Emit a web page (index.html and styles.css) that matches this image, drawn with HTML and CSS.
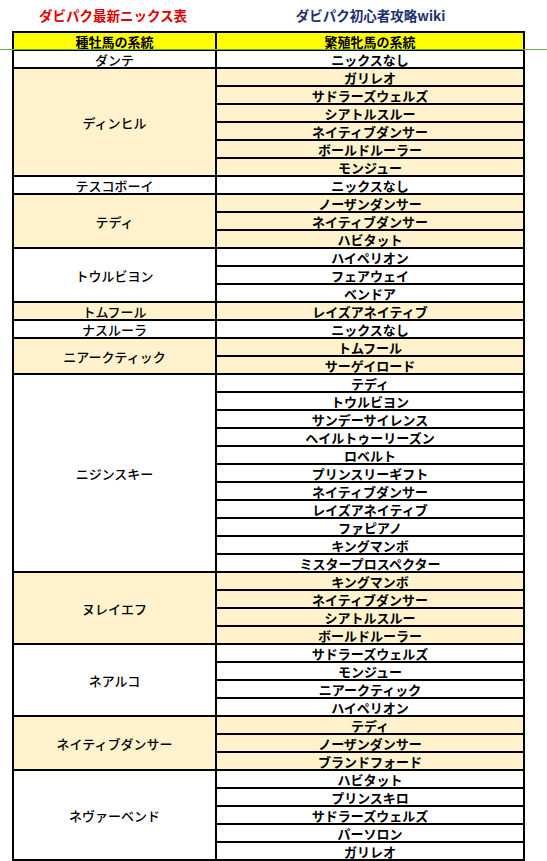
FILE: index.html
```html
<!DOCTYPE html>
<html lang="ja">
<head>
<meta charset="utf-8">
<link rel="stylesheet" href="styles.css">
</head>
<body>
<div class="page">
  <div class="titles">
    <div class="title red">ダビパク最新ニックス表</div>
    <div class="title navy">ダビパク初心者攻略wiki</div>
  </div>
  <table class="nicks">
    <thead>
      <tr><th class="l">種牡馬の系統</th><th class="r">繁殖牝馬の系統</th></tr>
    </thead>
    <tbody>
      <tr class="w"><td class="l one">ダンテ</td><td class="r">ニックスなし</td></tr>

      <tr class="b"><td class="l" rowspan="6">ディンヒル</td><td class="r">ガリレオ</td></tr>
      <tr class="b"><td class="r">サドラーズウェルズ</td></tr>
      <tr class="b"><td class="r">シアトルスルー</td></tr>
      <tr class="b"><td class="r">ネイティブダンサー</td></tr>
      <tr class="b"><td class="r">ボールドルーラー</td></tr>
      <tr class="b"><td class="r">モンジュー</td></tr>

      <tr class="w"><td class="l one">テスコボーイ</td><td class="r">ニックスなし</td></tr>

      <tr class="b"><td class="l" rowspan="3">テディ</td><td class="r">ノーザンダンサー</td></tr>
      <tr class="b"><td class="r">ネイティブダンサー</td></tr>
      <tr class="b"><td class="r">ハビタット</td></tr>

      <tr class="w"><td class="l" rowspan="3">トウルビヨン</td><td class="r">ハイペリオン</td></tr>
      <tr class="w"><td class="r">フェアウェイ</td></tr>
      <tr class="w"><td class="r">ベンドア</td></tr>

      <tr class="b"><td class="l one">トムフール</td><td class="r">レイズアネイティブ</td></tr>

      <tr class="w"><td class="l one">ナスルーラ</td><td class="r">ニックスなし</td></tr>

      <tr class="b"><td class="l" rowspan="2">ニアークティック</td><td class="r">トムフール</td></tr>
      <tr class="b"><td class="r">サーゲイロード</td></tr>

      <tr class="w"><td class="l" rowspan="11">ニジンスキー</td><td class="r">テディ</td></tr>
      <tr class="w"><td class="r">トウルビヨン</td></tr>
      <tr class="w"><td class="r">サンデーサイレンス</td></tr>
      <tr class="w"><td class="r">ヘイルトゥーリーズン</td></tr>
      <tr class="w"><td class="r">ロベルト</td></tr>
      <tr class="w"><td class="r">プリンスリーギフト</td></tr>
      <tr class="w"><td class="r">ネイティブダンサー</td></tr>
      <tr class="w"><td class="r">レイズアネイティブ</td></tr>
      <tr class="w"><td class="r">ファピアノ</td></tr>
      <tr class="w"><td class="r">キングマンボ</td></tr>
      <tr class="w"><td class="r">ミスタープロスペクター</td></tr>

      <tr class="b"><td class="l" rowspan="4">ヌレイエフ</td><td class="r">キングマンボ</td></tr>
      <tr class="b"><td class="r">ネイティブダンサー</td></tr>
      <tr class="b"><td class="r">シアトルスルー</td></tr>
      <tr class="b"><td class="r">ボールドルーラー</td></tr>

      <tr class="w"><td class="l" rowspan="4">ネアルコ</td><td class="r">サドラーズウェルズ</td></tr>
      <tr class="w"><td class="r">モンジュー</td></tr>
      <tr class="w"><td class="r">ニアークティック</td></tr>
      <tr class="w"><td class="r">ハイペリオン</td></tr>

      <tr class="b"><td class="l" rowspan="3">ネイティブダンサー</td><td class="r">テディ</td></tr>
      <tr class="b"><td class="r">ノーザンダンサー</td></tr>
      <tr class="b"><td class="r">ブランドフォード</td></tr>

      <tr class="w"><td class="l" rowspan="5">ネヴァーベンド</td><td class="r">ハビタット</td></tr>
      <tr class="w"><td class="r">プリンスキロ</td></tr>
      <tr class="w"><td class="r">サドラーズウェルズ</td></tr>
      <tr class="w"><td class="r">パーソロン</td></tr>
      <tr class="w"><td class="r">ガリレオ</td></tr>
    </tbody>
  </table>
  <div class="guide"></div>
</div>
</body>
</html>
```
FILE: styles.css
```css
html, body {
  margin: 0;
  padding: 0;
  background: #ffffff;
}
.page {
  position: relative;
  width: 547px;
  height: 861px;
  overflow: hidden;
  font-family: "Noto Sans CJK JP", "Noto Sans", sans-serif;
  color: #000;
}
.titles {
  display: grid;
  grid-template-columns: 204px 311px;
  margin-left: 11px;
  height: 31px;
  align-items: start;
}
.title {
  text-align: center;
  font-size: 13.5px;
  font-weight: 700;
  line-height: 16px;
  padding-top: 7px;
}
.red { color: #e00000; }
.navy { color: #1f3070; }
.nicks {
  margin-left: 12px;
  border-collapse: collapse;
  border: 2px solid #000;
  table-layout: fixed;
  width: 513px;
}
.nicks th, .nicks td {
  border: 2px solid #000;
  padding: 1px 0 0;
  height: 15px;
  line-height: 15px;
  font-size: 13px;
  text-align: center;
  vertical-align: bottom;
  white-space: nowrap;
}
.nicks th {
  background: #ffff00;
  font-weight: 700;
}
.nicks .l { width: 201px; font-weight: 500; }
.nicks .r { font-weight: 700; }
.nicks th.l { font-weight: 700; }
.nicks td.l { vertical-align: middle; }
.nicks td.l.one { vertical-align: bottom; }
.w td { background: #ffffff; }
.b td { background: #fff2cc; }
.guide {
  position: absolute;
  left: 0;
  top: 49px;
  width: 547px;
  height: 1px;
  background: #6fa84c;
}
```
